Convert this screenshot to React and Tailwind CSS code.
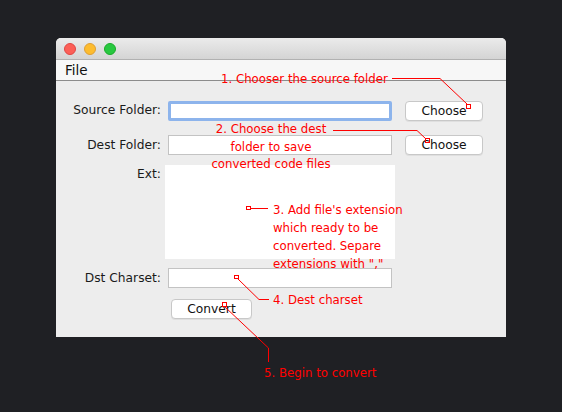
import React from "react";

const font = { fontFamily: '"DejaVu Sans", "Liberation Sans", sans-serif' };

function Field({ focus }) {
  return focus ? (
    <div className="w-[224px] h-[20px] rounded-[2px] border-[3px] border-[#8db4ec] bg-white" />
  ) : (
    <div className="w-[224px] h-[20px] border border-[#c3c3c3] bg-white" />
  );
}

function Btn({ children, w }) {
  return (
    <div
      className={`${w} h-[20px] rounded-[4px] border border-[#c8c8c8] bg-white shadow-[0_1px_0_rgba(0,0,0,0.06)] flex items-center justify-center text-[12.25px] text-[#111]`}
    >
      {children}
    </div>
  );
}

export default function App() {
  return (
    <div
      className="relative w-[562px] h-[412px] bg-[#1f2024] pt-[38px] pl-[56px]"
      style={font}
    >
      <div className="w-[450px] h-[299px] rounded-t-[5px] overflow-hidden flex flex-col bg-[#ededed]">
        <div className="h-[22px] shrink-0 bg-gradient-to-b from-[#ebebeb] to-[#d4d4d4] border-b border-[#b1b1b1] flex items-center pl-[8px] gap-[8px]">
          <div className="w-[12px] h-[12px] rounded-full bg-[#fc5f57] border border-[#df4744]" />
          <div className="w-[12px] h-[12px] rounded-full bg-[#fdbc2e] border border-[#de9f34]" />
          <div className="w-[12px] h-[12px] rounded-full bg-[#28c840] border border-[#1aab29]" />
        </div>
        <div className="h-[21px] shrink-0 bg-[#f7f7f7] border-b border-[#8c8c8c] flex items-center pl-[9px] text-[13.5px] text-[#111]">
          File
        </div>
        <div className="flex flex-col pt-[19px] text-[12.25px] text-[#1a1a1a]">
          <div className="flex items-center">
            <div className="w-[105px] text-right">Source Folder:</div>
            <div className="ml-[7px]">
              <Field focus />
            </div>
            <div className="ml-[13px] mt-[1px]">
              <Btn w="w-[78px]">Choose</Btn>
            </div>
          </div>
          <div className="flex items-center mt-[14px]">
            <div className="w-[105px] text-right">Dest Folder:</div>
            <div className="ml-[7px]">
              <Field />
            </div>
            <div className="ml-[13px]">
              <Btn w="w-[78px]">Choose</Btn>
            </div>
          </div>
          <div className="flex items-start mt-[10px]">
            <div className="w-[105px] text-right leading-[18px]">Ext:</div>
            <div className="ml-[4px] w-[230px] h-[94px] bg-white" />
          </div>
          <div className="flex items-center mt-[9px]">
            <div className="w-[105px] text-right">Dst Charset:</div>
            <div className="ml-[7px]">
              <Field />
            </div>
          </div>
          <div className="flex mt-[11px] pl-[115px]">
            <Btn w="w-[81px]">Convert</Btn>
          </div>
        </div>
      </div>

      <svg
        className="absolute left-0 top-0 pointer-events-none"
        width="562"
        height="412"
      >
        <g stroke="#ff0000" strokeWidth="1" fill="none">
          <polyline points="392,78.5 440,78.5 467,104" />
          <rect x="466.5" y="104.5" width="4" height="4" />
          <polyline points="333,130.5 417,130.5 426,139" />
          <rect x="425.5" y="138.5" width="4" height="4" />
          <rect x="246.5" y="206.5" width="4" height="3" />
          <line x1="251" y1="208.5" x2="268" y2="208.5" />
          <rect x="234.5" y="275.5" width="4" height="3" />
          <polyline points="238,279 259,299.5 269,299.5" />
          <rect x="222.5" y="302.5" width="4" height="4" />
          <polyline points="225,307 268.5,348 268.5,362" />
        </g>
      </svg>

      <div className="absolute left-[221px] top-[70px] text-[11.75px] leading-[18px] text-[#ff0000] whitespace-nowrap">
        1. Chooser the source folder
      </div>
      <div className="absolute left-[196px] top-[121px] w-[150px] text-center text-[11.75px] leading-[17.5px] text-[#ff0000] whitespace-nowrap">
        2. Choose the dest
        <br />
        folder to save
        <br />
        converted code files
      </div>
      <div className="absolute left-[273px] top-[201px] text-[11.75px] leading-[18px] text-[#ff0000] whitespace-nowrap">
        3. Add file's extension
        <br />
        which ready to be
        <br />
        converted. Separe
        <br />
        extensions with ","
      </div>
      <div className="absolute left-[273px] top-[291px] text-[11.75px] leading-[18px] text-[#ff0000] whitespace-nowrap">
        4. Dest charset
      </div>
      <div className="absolute left-[264px] top-[364px] text-[11.75px] leading-[18px] text-[#ff0000] whitespace-nowrap">
        5. Begin to convert
      </div>
    </div>
  );
}
